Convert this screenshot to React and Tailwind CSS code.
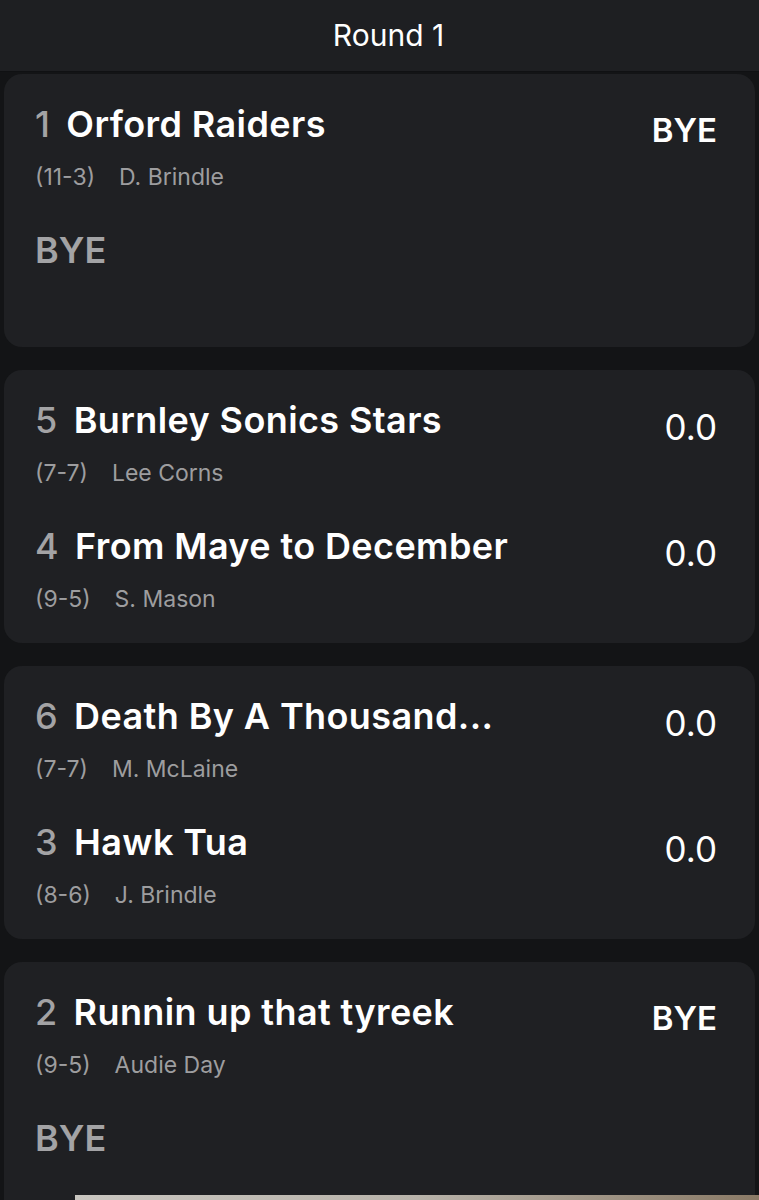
import React from 'react';

const matchups = [
    {
        teams: [
            { seed: 1, name: 'Orford Raiders', record: '(11-3)', owner: 'D. Brindle', score: 'BYE' },
        ],
        bye: true,
    },
    {
        teams: [
            { seed: 5, name: 'Burnley Sonics Stars', record: '(7-7)', owner: 'Lee Corns', score: '0.0' },
            { seed: 4, name: 'From Maye to December', record: '(9-5)', owner: 'S. Mason', score: '0.0' },
        ],
    },
    {
        teams: [
            { seed: 6, name: 'Death By A Thousand...', record: '(7-7)', owner: 'M. McLaine', score: '0.0' },
            { seed: 3, name: 'Hawk Tua', record: '(8-6)', owner: 'J. Brindle', score: '0.0' },
        ],
    },
    {
        teams: [
            { seed: 2, name: 'Runnin up that tyreek', record: '(9-5)', owner: 'Audie Day', score: 'BYE' },
        ],
        bye: true,
    },
];

const TeamRow = ({ team }) => {
    const isBye = team.score === 'BYE';
    return (
        <div>
            <div className="flex items-start justify-between">
                <div className="flex items-center gap-[16px] h-[40px] text-[36px] font-semibold tracking-[0.4px]">
                    <span className="text-[#a3a3a5] font-medium">{team.seed}</span>
                    <span className="text-white">{team.name}</span>
                </div>
                <div
                    className={
                        isBye
                            ? 'h-[40px] mt-[7px] flex items-center text-[33px] font-semibold text-white'
                            : 'h-[40px] mt-[7px] flex items-center text-[35px] text-white'
                    }
                >
                    {team.score}
                </div>
            </div>
            <div className="flex items-center gap-[24px] h-[28px] mt-[12px] text-[23px] text-[#9d9d9f]">
                <span>{team.record}</span>
                <span>{team.owner}</span>
            </div>
        </div>
    );
};

const MatchupCard = ({ matchup }) => (
    <div className="h-[273px] shrink-0 rounded-[18px] bg-[#1f2023] pl-[31px] pr-[38px] pt-[30px] flex flex-col gap-[39px]">
        {matchup.teams.map((team) => (
            <TeamRow key={team.seed} team={team} />
        ))}
        {matchup.bye && (
            <div className="h-[40px] flex items-center text-[36px] font-semibold text-[#a3a3a5]">BYE</div>
        )}
    </div>
);

export default function App() {
    return (
        <div className="relative h-[1200px] overflow-hidden bg-[#131416] font-['Inter',sans-serif]">
            <div className="h-[72px] flex items-center justify-center pl-[18px] bg-[#1e1f22] border-b border-[#101113] text-white text-[30px]">
                Round 1
            </div>
            <div className="flex flex-col gap-[23px] px-[4px] pt-[2px]">
                {matchups.map((m, i) => (
                    <MatchupCard key={i} matchup={m} />
                ))}
            </div>
            {/* preview image peeking in at the bottom */}
            <div className="absolute left-[75px] right-0 top-[1195px] h-[10px] bg-gradient-to-r from-[#c9c6c0] via-[#b8b3aa] to-[#8a7a66]" />
        </div>
    );
}
